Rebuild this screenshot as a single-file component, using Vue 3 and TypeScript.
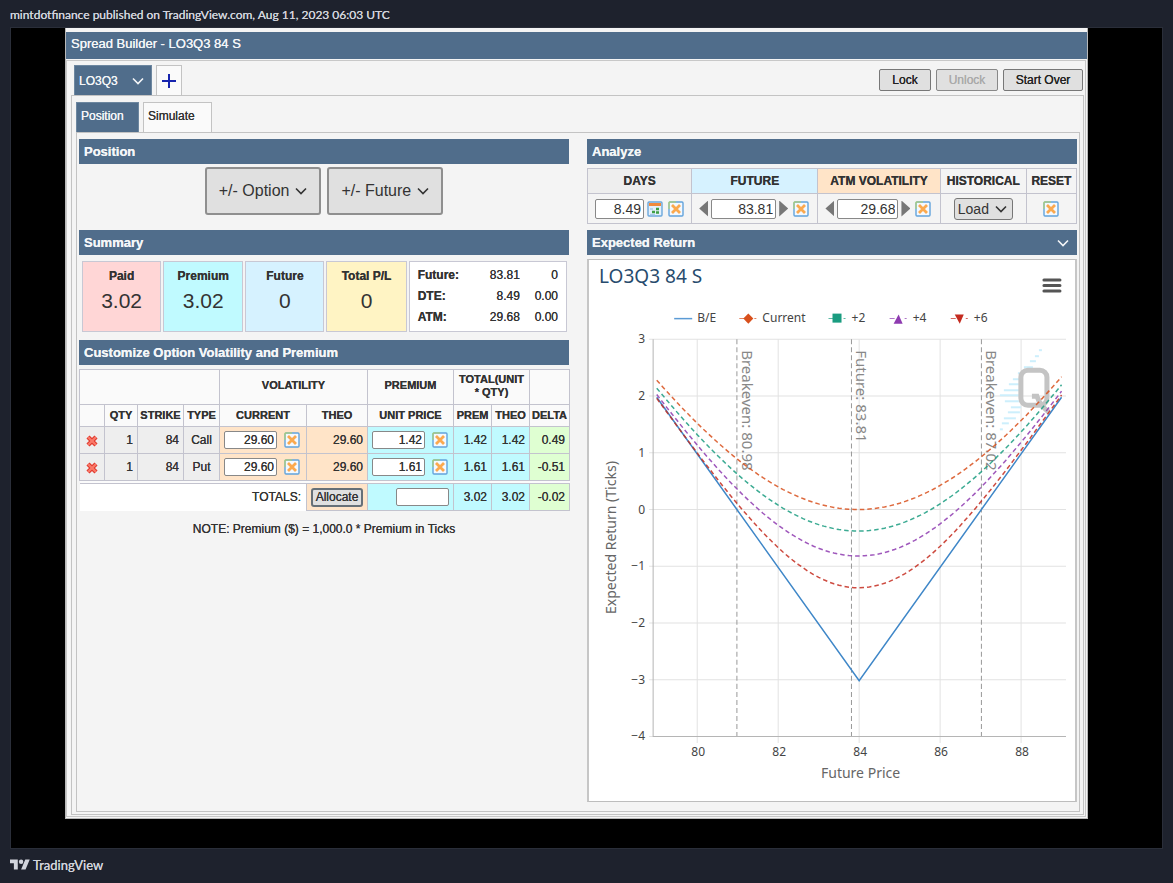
<script setup lang="ts">
import { ref } from 'vue'

interface Leg {
  qty: number
  strike: number
  type: string
  vol: string
  theoVol: string
  price: string
  prem: string
  theo: string
  delta: string
}

interface Curve {
  name: string
  color: string
  atm: number
  marker: string
  legendX: number
}

const days = ref('8.49')
const future = ref('83.81')
const atmVol = ref('29.68')
const totalPrice = ref('')

const legs = ref<Leg[]>([
  { qty: 1, strike: 84, type: 'Call', vol: '29.60', theoVol: '29.60', price: '1.42', prem: '1.42', theo: '1.42', delta: '0.49' },
  { qty: 1, strike: 84, type: 'Put', vol: '29.60', theoVol: '29.60', price: '1.61', prem: '1.61', theo: '1.61', delta: '-0.51' },
])

const cards = [
  { label: 'Paid', value: '3.02', tone: 'pink' },
  { label: 'Premium', value: '3.02', tone: 'cyan' },
  { label: 'Future', value: '0', tone: 'sky' },
  { label: 'Total P/L', value: '0', tone: 'yellow' },
]

const stats = [
  { label: 'Future:', value: '83.81', change: '0' },
  { label: 'DTE:', value: '8.49', change: '0.00' },
  { label: 'ATM:', value: '29.68', change: '0.00' },
]

const STRIKE = 84
const PAID = 3.02
const px = (price: number) => 108 + (price - 80) * 40.4
const py = (value: number) => 249 - value * 56.6

function erf(x: number): number {
  const t = 1 / (1 + 0.3275911 * Math.abs(x))
  const poly = t * (0.254829592 + t * (-0.284496736 + t * (1.421413741 + t * (-1.453152027 + t * 1.061405429))))
  const y = 1 - poly * Math.exp(-x * x)
  return x < 0 ? -y : y
}

// Value of a straddle whose at-the-money price is `atm`, less what was paid.
function straddle(price: number, atm: number): number {
  const s = atm * Math.sqrt(Math.PI / 2)
  const d = price - STRIKE
  return atm * Math.exp((-d * d) / (2 * s * s)) + d * erf(d / s / Math.SQRT2) - PAID + d * 0.006
}

function curvePath(atm: number): string {
  const points: string[] = []
  for (let i = 0; i <= 80; i++) {
    const price = 79 + i / 8
    points.push(`${px(price).toFixed(1)} ${py(straddle(price, atm)).toFixed(1)}`)
  }
  return 'M' + points.join('L')
}

const curves: Curve[] = [
  { name: 'Current', color: '#d8501c', atm: 3.02, marker: 'M0 -5L5 0L0 5L-5 0Z', legendX: 150 },
  { name: '+2', color: '#1a9c80', atm: 2.64, marker: 'M-5 -5H4V4H-5Z', legendX: 239 },
  { name: '+4', color: '#8e3bb0', atm: 2.2, marker: 'M0 -4L4 5H-5Z', legendX: 300 },
  { name: '+6', color: '#c42b1f', atm: 1.64, marker: 'M-5 -4H4L0 5Z', legendX: 361 },
]

const breakEven = `M${px(79)} ${py(1.98)}L${px(84)} ${py(-3.02)}L${px(89)} ${py(1.98)}`
const xTicks = [80, 82, 84, 86, 88]
const yTicks = [3, 2, 1, 0, -1, -2, -3, -4]
const markers = [
  { at: 80.98, text: 'Breakeven: 80.98' },
  { at: 83.81, text: 'Future: 83.81' },
  { at: 87.02, text: 'Breakeven: 87.02' },
]
const streaks = [
  [449, 452, 90], [445, 449, 96], [440, 446, 101], [434, 443, 107], [428, 434, 113],
  [423, 430, 119], [419, 429, 124], [414, 429, 130], [410, 429, 135], [415, 429, 141],
  [421, 431, 147], [418, 430, 152], [414, 426, 158], [412, 419, 163], [410, 413, 169],
]
const tickLabel = (n: number) => (n < 0 ? '−' + Math.abs(n) : String(n))
</script>

<template>
  <div class="page">
    <svg class="defs" aria-hidden="true">
      <symbol id="ic-reset" viewBox="0 0 16 16">
        <rect x="1" y="1" width="14" height="14" rx="1" fill="#f3f9ff" stroke="#62a3dc" stroke-width="1.4" />
        <path d="M1 8V1H8" fill="none" stroke="#b9d65c" stroke-width="1" />
        <path d="M4 4L12 12M12 4L4 12" stroke="#fba94e" stroke-width="2.8" />
      </symbol>
      <symbol id="ic-calendar" viewBox="0 0 16 16">
        <rect x="1" y="1" width="14" height="14" rx="1" fill="#e4f0fb" stroke="#6ba7dc" stroke-width="1.4" />
        <path d="M2 3.5H14" stroke="#f08a3c" stroke-width="3" />
        <path d="M9 8H12M5 11H8M9 11.5H12" stroke="#3f9f45" stroke-width="2.6" />
        <path d="M3 8H6M3 13.5H8" stroke="#a9cbe8" stroke-width="1.4" />
      </symbol>
      <symbol id="ic-delete" viewBox="0 0 14 14">
        <path d="M3 3L11 11M11 3L3 11" stroke="#e0382c" stroke-width="4.4" />
        <path d="M3.2 3.2L10.8 10.8M10.8 3.2L3.2 10.8" stroke="#fa7a6a" stroke-width="2.2" />
      </symbol>
      <symbol id="ic-chevron" viewBox="0 0 12 8">
        <path d="M1 1.5L6 6.5L11 1.5" fill="none" stroke="currentColor" stroke-width="1.6" />
      </symbol>
    </svg>

    <header class="byline">mintdotfinance published on TradingView.com, Aug 11, 2023 06:03 UTC</header>

    <main class="stage">
      <div class="app">
        <h1 class="title">Spread Builder - LO3Q3 84 S</h1>
        <div class="shell">
          <div class="toolbar">
            <nav class="tabs">
              <button class="tab active book">LO3Q3<svg class="chev"><use href="#ic-chevron" /></svg></button>
              <button class="tab add" aria-label="Add spread">
                <svg width="14" height="14" viewBox="0 0 14 14"><path d="M7 0V14M0 7H14" stroke="#1724ae" stroke-width="2" /></svg>
              </button>
            </nav>
            <div class="actions">
              <button class="btn lock">Lock</button>
              <button class="btn unlock" disabled>Unlock</button>
              <button class="btn over">Start Over</button>
            </div>
          </div>

          <div class="book-panel">
            <nav class="tabs sub">
              <button class="tab active position">Position</button>
              <button class="tab simulate">Simulate</button>
            </nav>

            <div class="work">
              <div class="column">
                <section>
                  <h2 class="bar">Position</h2>
                  <div class="adders">
                    <button class="big">+/- Option<svg class="chev"><use href="#ic-chevron" /></svg></button>
                    <button class="big">+/- Future<svg class="chev"><use href="#ic-chevron" /></svg></button>
                  </div>
                </section>

                <section>
                  <h2 class="bar">Summary</h2>
                  <div class="cards">
                    <div v-for="c in cards" :key="c.label" class="card" :class="c.tone">
                      <div class="card-label">{{ c.label }}</div>
                      <div class="card-value">{{ c.value }}</div>
                    </div>
                    <table class="stats">
                      <tbody>
                        <tr v-for="s in stats" :key="s.label">
                          <th scope="row">{{ s.label }}</th>
                          <td>{{ s.value }}</td>
                          <td>{{ s.change }}</td>
                        </tr>
                      </tbody>
                    </table>
                  </div>
                </section>

                <section>
                  <h2 class="bar">Customize Option Volatility and Premium</h2>
                  <table class="legs">
                    <colgroup>
                      <col class="c-del" /><col class="c-qty" /><col class="c-strike" /><col class="c-type" /><col class="c-cur" />
                      <col class="c-theo" /><col class="c-unit" /><col class="c-prem" /><col class="c-prem" /><col class="c-delta" />
                    </colgroup>
                    <thead>
                      <tr class="groups">
                        <th colspan="4"></th>
                        <th colspan="2">VOLATILITY</th>
                        <th>PREMIUM</th>
                        <th colspan="2">TOTAL(UNIT<br />* QTY)</th>
                        <th></th>
                      </tr>
                      <tr>
                        <th></th>
                        <th>QTY</th>
                        <th>STRIKE</th>
                        <th>TYPE</th>
                        <th>CURRENT</th>
                        <th>THEO</th>
                        <th>UNIT PRICE</th>
                        <th>PREM</th>
                        <th>THEO</th>
                        <th>DELTA</th>
                      </tr>
                    </thead>
                    <tbody>
                      <tr v-for="leg in legs" :key="leg.type">
                        <td class="gray mid"><button class="icon" :aria-label="'Remove ' + leg.type"><svg class="i14"><use href="#ic-delete" /></svg></button></td>
                        <td class="gray">{{ leg.qty }}</td>
                        <td class="gray">{{ leg.strike }}</td>
                        <td class="gray mid">{{ leg.type }}</td>
                        <td class="peach">
                          <div class="edit">
                            <input v-model="leg.vol" :aria-label="leg.type + ' volatility'" />
                            <button class="icon" :aria-label="'Reset ' + leg.type + ' volatility'"><svg class="i16"><use href="#ic-reset" /></svg></button>
                          </div>
                        </td>
                        <td class="peach">{{ leg.theoVol }}</td>
                        <td class="cyan">
                          <div class="edit">
                            <input v-model="leg.price" :aria-label="leg.type + ' unit price'" />
                            <button class="icon" :aria-label="'Reset ' + leg.type + ' price'"><svg class="i16"><use href="#ic-reset" /></svg></button>
                          </div>
                        </td>
                        <td class="cyan">{{ leg.prem }}</td>
                        <td class="cyan">{{ leg.theo }}</td>
                        <td class="green">{{ leg.delta }}</td>
                      </tr>
                    </tbody>
                    <tbody>
                      <tr class="spacer"><td colspan="10"></td></tr>
                      <tr>
                        <td colspan="5" class="totals">TOTALS:</td>
                        <td class="peach mid"><button class="allocate">Allocate</button></td>
                        <td class="cyan"><div class="edit end"><input v-model="totalPrice" aria-label="Total unit price" /></div></td>
                        <td class="cyan">3.02</td>
                        <td class="cyan">3.02</td>
                        <td class="green">-0.02</td>
                      </tr>
                    </tbody>
                  </table>
                  <p class="note">NOTE: Premium ($) = 1,000.0 * Premium in Ticks</p>
                </section>
              </div>

              <div class="column">
                <section>
                  <h2 class="bar">Analyze</h2>
                  <table class="analyze">
                    <colgroup>
                      <col class="a-days" /><col class="a-future" /><col class="a-vol" /><col class="a-hist" /><col class="a-reset" />
                    </colgroup>
                    <thead>
                      <tr>
                        <th class="gray">DAYS</th>
                        <th class="sky">FUTURE</th>
                        <th class="peach">ATM VOLATILITY</th>
                        <th>HISTORICAL</th>
                        <th>RESET</th>
                      </tr>
                    </thead>
                    <tbody>
                      <tr>
                        <td>
                          <div class="field">
                            <input v-model="days" class="w-days" aria-label="Days" />
                            <button class="icon" aria-label="Pick a date"><svg class="i16"><use href="#ic-calendar" /></svg></button>
                            <button class="icon far" aria-label="Reset days"><svg class="i16"><use href="#ic-reset" /></svg></button>
                          </div>
                        </td>
                        <td>
                          <div class="field">
                            <button class="step down" aria-label="Future down"></button>
                            <input v-model="future" class="w-future" aria-label="Future" />
                            <button class="step up" aria-label="Future up"></button>
                            <button class="icon far" aria-label="Reset future"><svg class="i16"><use href="#ic-reset" /></svg></button>
                          </div>
                        </td>
                        <td>
                          <div class="field">
                            <button class="step down" aria-label="Volatility down"></button>
                            <input v-model="atmVol" class="w-vol" aria-label="ATM volatility" />
                            <button class="step up" aria-label="Volatility up"></button>
                            <button class="icon far" aria-label="Reset volatility"><svg class="i16"><use href="#ic-reset" /></svg></button>
                          </div>
                        </td>
                        <td>
                          <div class="load">
                            <select aria-label="Historical"><option>Load</option></select>
                            <svg class="chev"><use href="#ic-chevron" /></svg>
                          </div>
                        </td>
                        <td class="mid"><button class="icon" aria-label="Reset all"><svg class="i16"><use href="#ic-reset" /></svg></button></td>
                      </tr>
                    </tbody>
                  </table>
                </section>

                <section>
                  <h2 class="bar fold">Expected Return<svg class="chev"><use href="#ic-chevron" /></svg></h2>
                  <div class="chart">
                    <svg viewBox="0 0 485 540" role="img" aria-label="Expected return by future price">
                      <text x="10" y="23" class="c-title">LO3Q3 84 S</text>
                      <path d="M454 20H470M454 25.500H470M454 31H470" stroke="#555" stroke-width="3" stroke-linecap="round" />

                      <g class="grid">
                        <path v-for="t in xTicks" :key="'x' + t" :d="`M${px(t)} 79V482`" />
                        <path v-for="t in yTicks" :key="'y' + t" :d="`M60 ${py(t)}H476`" />
                      </g>
                      <path class="axis" d="M64 79V475.500H476" />

                      <g stroke="#cdeffc" stroke-width="2">
                        <path v-for="s in streaks" :key="s[2]" :d="`M${s[0]} ${s[2]}H${s[1]}`" />
                      </g>
                      <g fill="none" stroke="#c4c4c4" stroke-width="5">
                        <rect x="431" y="110" width="26" height="35" rx="7" />
                        <path d="M442 136H447Q450 145 459 152" />
                      </g>

                      <g v-for="m in markers" :key="m.text">
                        <path class="marker" :d="`M${px(m.at)} 79V475`" />
                        <text class="m-text" :transform="`translate(${px(m.at) + 5} 90) rotate(90)`">{{ m.text }}</text>
                      </g>

                      <path :d="breakEven" fill="none" stroke="#3f87c8" stroke-width="1.500" />
                      <path
                        v-for="c in curves"
                        :key="c.name"
                        :d="curvePath(c.atm)"
                        fill="none"
                        :stroke="c.color"
                        stroke-width="1.500"
                        stroke-dasharray="4.500 3"
                        opacity="0.850"
                      />

                      <path d="M85 58.500H103" stroke="#5b9bd5" stroke-width="1.500" />
                      <text x="108" y="62" class="c-label">B/E</text>
                      <g v-for="c in curves" :key="'l' + c.name" :transform="`translate(${c.legendX} 0)`">
                        <path d="M0 58.500H18" :stroke="c.color" stroke-dasharray="5 10 2 2" opacity="0.700" />
                        <path :d="c.marker" transform="translate(9 58.500)" :fill="c.color" />
                        <text x="23" y="62" class="c-label">{{ c.name }}</text>
                      </g>

                      <text v-for="t in xTicks" :key="'xl' + t" :x="px(t) + 1" y="495" class="c-label center">{{ t }}</text>
                      <text v-for="t in yTicks" :key="'yl' + t" x="56" :y="py(t) + 4" class="c-label right">{{ tickLabel(t) }}</text>
                      <text x="271" y="517" class="a-title center">Future Price</text>
                      <text class="a-title center" transform="translate(27 277) rotate(-90)">Expected Return (Ticks)</text>
                    </svg>
                  </div>
                </section>
              </div>
            </div>
          </div>
        </div>
      </div>
    </main>

    <footer class="brand">
      <svg width="20" height="16" viewBox="0 0 36 28" aria-hidden="true">
        <path d="M14 22H7V11H0V4H14ZM28 22H20L27.500 4H35.500Z" fill="#d1d4dc" />
        <circle cx="20" cy="8" r="4" fill="#d1d4dc" />
      </svg>
      <span>TradingView</span>
    </footer>
  </div>
</template>

<style>
body {
  margin: 0;
  background: #1e222d;
}
</style>

<style scoped>
* {
  box-sizing: border-box;
}
.page {
  min-height: 100vh;
  padding: 0 10px;
  background: #1e222d;
  color: #333;
  font: 12px/16px "Liberation Sans", Arial, sans-serif;
}
.defs {
  position: absolute;
  width: 0;
  height: 0;
}
button,
input,
select {
  font: inherit;
  color: inherit;
  margin: 0;
}
button {
  padding: 0;
  cursor: pointer;
}
h1,
h2,
p {
  margin: 0;
}
.byline {
  height: 27px;
  padding-top: 7px;
  color: #d1d4dc;
  font: 12px/16px Lato, sans-serif;
  text-shadow: 0 0 0 currentColor;
}
.stage {
  border: 1px solid #2a2e39;
  background: #000;
  padding: 0 74px 29px 54px;
}
.app {
  padding-top: 4px;
  border: 1px solid #b8b8b8;
  border-top: 0;
  background: #f4f4f4;
  text-shadow: 0 0 0 currentColor;
}
.title {
  height: 27px;
  padding: 0 5px;
  background: #506d8b;
  color: #f4f6f8;
  font-size: 13px;
  font-weight: 400;
  line-height: 24px;
}
.shell {
  margin: 1px 1px 1px 0;
  padding: 4px 1px 1px 4px;
  border: 1px solid #c8c8c8;
}
.toolbar {
  display: flex;
  justify-content: space-between;
  align-items: flex-end;
  padding-left: 3px;
}
.tabs {
  display: flex;
  align-items: flex-end;
  gap: 4px;
}
.tab {
  display: flex;
  align-items: center;
  height: 30px;
  padding: 0 4px;
  border: 1px solid #c3c3c3;
  border-bottom: 0;
  background: #fafafa;
  text-shadow: inherit;
}
.tab.active {
  background: #506d8b;
  border-color: #6d87a0;
  color: #f4f6f8;
}
.sub .tab {
  padding-bottom: 3px;
}
.book {
  width: 78px;
  justify-content: space-between;
}
.book .chev {
  margin-right: 3px;
}
.add {
  width: 26px;
  padding: 0 5px;
}
.chev {
  width: 12px;
  height: 8px;
  flex: none;
}
.actions {
  display: flex;
  gap: 5px;
  padding: 0 1px 4px 0;
}
.btn {
  height: 22px;
  border: 1px solid #777;
  border-radius: 2px;
  background: #e0e0e0;
  color: #222;
  text-shadow: inherit;
}
.btn:disabled {
  border-color: #888;
  color: #aaa;
}
.lock {
  width: 52px;
}
.unlock {
  width: 62px;
}
.over {
  width: 80px;
}
.book-panel {
  padding: 6px 3px 2px 4px;
  border: 1px solid #c3c3c3;
}
.position {
  width: 63px;
}
.simulate {
  width: 69px;
}
.work {
  display: grid;
  grid-template-columns: minmax(0, 1fr) minmax(0, 1fr);
  gap: 18px;
  padding: 6px 2px 9px;
  border: 1px solid #c3c3c3;
  align-items: start;
}
.bar {
  height: 25px;
  padding: 0 5px;
  background: #506d8b;
  color: #f4f6f8;
  font-size: 13px;
  font-weight: 700;
  line-height: 25px;
}
.fold {
  display: flex;
  justify-content: space-between;
  align-items: center;
}
.fold .chev {
  margin-right: 3px;
}
.adders {
  display: flex;
  justify-content: center;
  gap: 6px;
  padding: 3px 0 15px;
}
.big {
  display: flex;
  align-items: center;
  gap: 6px;
  height: 48px;
  padding: 0 12px;
  border: 2px solid #8f8f8f;
  border-radius: 3px;
  background: #e0e0e0;
  font-size: 16px;
}
.cards {
  display: grid;
  grid-template-columns: 79fr 80fr 79fr 80fr 158fr;
  gap: 2px;
  padding: 6px 2px 8px 3px;
}
.card {
  height: 71px;
  padding-top: 6px;
  border: 1px solid #c8c8d4;
  text-align: center;
}
.card-label {
  font-weight: 700;
}
.card-value {
  font-size: 21px;
  line-height: 34px;
  text-shadow: none;
}
.pink {
  background: #ffd6d6;
}
.cyan {
  background: #c0faff;
}
.sky {
  background: #d6f2ff;
}
.yellow {
  background: #fff4c4;
}
.peach {
  background: #ffe4c8;
}
.green {
  background: #dfffd2;
}
.gray {
  background: #eeeeee;
}
.stats {
  height: 71px;
  padding: 3px 5px;
  border: 1px solid #c8c8d4;
  border-spacing: 0;
  background: #fff;
}
.stats th,
.stats td {
  padding: 0 3px;
  text-align: right;
  line-height: 21px;
}
.stats th {
  text-align: left;
}
.legs,
.analyze {
  width: 100%;
  margin-top: 4px;
  border-collapse: collapse;
  table-layout: fixed;
}
.legs th,
.legs td,
.analyze th,
.analyze td {
  border: 1px solid #c3c3ce;
  padding: 0;
}
.legs th {
  height: 22px;
  padding-bottom: 1px;
  background: #fafafa;
  font-size: 11px;
  line-height: 13px;
}
.legs .groups th {
  height: 35px;
  padding-bottom: 3px;
}
.legs td {
  height: 27px;
  padding: 0 4px 1px 0;
  text-align: right;
}
.legs td.mid,
.mid {
  padding: 0;
  text-align: center;
}
.legs .spacer td {
  height: 3px;
  padding: 0;
  border-width: 1px 0;
  background: #fbfbfb;
}
.legs .totals {
  padding-right: 5px;
  border: 0;
  background: #fff;
}
.c-del { width: 25px; }
.c-qty { width: 33px; }
.c-strike { width: 46px; }
.c-type { width: 36px; }
.c-cur { width: 87px; }
.c-theo { width: 61px; }
.c-unit { width: 86px; }
.c-prem { width: 38px; }
.c-delta { width: 40px; }
.edit {
  display: flex;
  align-items: center;
  gap: 7px;
  padding-left: 4px;
}
.edit.end {
  justify-content: flex-end;
  padding: 0;
}
input {
  width: 53px;
  height: 18px;
  padding: 0 2px;
  border: 1px solid #888;
  border-radius: 2px;
  background: #fff;
  text-align: right;
  text-shadow: inherit;
}
.icon {
  display: inline-flex;
  border: 0;
  background: none;
  vertical-align: middle;
}
.i16 {
  width: 16px;
  height: 16px;
}
.i14 {
  width: 14px;
  height: 14px;
}
.allocate {
  height: 19px;
  padding: 0 3px;
  border: 2px solid #667078;
  border-radius: 3px;
  background: #e0e0e0;
  line-height: 15px;
  text-shadow: inherit;
}
.note {
  padding-top: 10px;
  text-align: center;
}
.analyze {
  margin-bottom: 6px;
}
.analyze th {
  height: 25px;
}
.analyze td {
  height: 30px;
}
.a-days { width: 104px; }
.a-future { width: 126px; }
.a-vol { width: 122px; }
.a-hist { width: 86px; }
.a-reset { width: 50px; }
.field {
  display: flex;
  align-items: center;
  padding-left: 7px;
  gap: 3px;
  font-size: 14px;
}
.field input {
  height: 20px;
  text-shadow: none;
}
.field .w-days {
  width: 49px;
}
.field .w-future {
  width: 65px;
}
.field .w-vol {
  width: 61px;
}
.field .far {
  margin-left: 2px;
}
.step {
  width: 9px;
  height: 16px;
  border: 0;
  background: #777;
}
.down {
  clip-path: polygon(100% 0, 100% 100%, 0 50%);
}
.up {
  clip-path: polygon(0 0, 100% 50%, 0 100%);
}
.load {
  display: flex;
  align-items: center;
  width: 59px;
  height: 22px;
  margin: 0 auto;
  padding: 0 5px 0 3px;
  border: 1px solid #777;
  border-radius: 3px;
  background: #e0e0e0;
  font-size: 14px;
}
.load select {
  flex: 1;
  min-width: 0;
  padding: 0;
  border: 0;
  background: none;
  appearance: none;
}
.chart {
  margin-top: 4px;
  border: 1px solid #bdbdbd;
  border-right: 2px solid #c6c6c6;
  border-left: 2px solid #c6c6c6;
  background: #fff;
  text-shadow: none;
}
.chart svg {
  display: block;
  width: 100%;
  font-family: "Noto Sans", sans-serif;
}
.c-title {
  font-size: 19px;
  fill: #274b6d;
}
.c-label {
  font-size: 12px;
  fill: #444;
}
.a-title {
  font-size: 14px;
  fill: #666;
}
.m-text {
  font-size: 15px;
  fill: #888;
}
.center {
  text-anchor: middle;
}
.right {
  text-anchor: end;
}
.grid path {
  stroke: #e2e2e2;
}
.axis {
  fill: none;
  stroke: #b5b5b5;
}
.marker {
  stroke: #999;
  stroke-dasharray: 5 3;
}
.brand {
  display: flex;
  align-items: center;
  gap: 3px;
  height: 32px;
  color: #d1d4dc;
  font: 13px/16px Lato, sans-serif;
  text-shadow: 0 0 0 currentColor;
}
</style>
